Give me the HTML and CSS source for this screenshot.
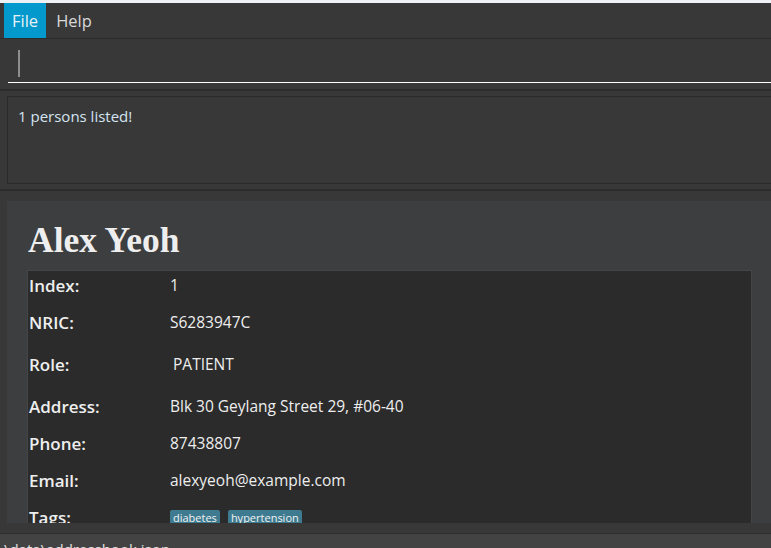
FILE: index.html
```html
<!DOCTYPE html>
<html lang="en">
<head>
<meta charset="utf-8">
<title>Address App</title>
<link rel="stylesheet" href="styles.css">
</head>
<body>
<div class="app">
  <div class="topstrip"></div>
  <nav class="menubar">
    <span class="menu-item active">File</span>
    <span class="menu-item">Help</span>
  </nav>
  <section class="command">
    <div class="command-input"><span class="caret"></span></div>
  </section>
  <section class="result-pane">
    <div class="result-box">1 persons listed!</div>
  </section>
  <section class="list-pane">
    <div class="card">
      <h1 class="name">Alex Yeoh</h1>
      <div class="details">
        <div class="row"><span class="label">Index:</span><span class="value">1</span></div>
        <div class="row"><span class="label">NRIC:</span><span class="value">S6283947C</span></div>
        <div class="row"><span class="label">Role:</span><span class="value role">PATIENT</span></div>
        <div class="row"><span class="label">Address:</span><span class="value">Blk 30 Geylang Street 29, #06-40</span></div>
        <div class="row"><span class="label">Phone:</span><span class="value">87438807</span></div>
        <div class="row"><span class="label">Email:</span><span class="value">alexyeoh@example.com</span></div>
        <div class="row"><span class="label">Tags:</span><span class="value tags"><span class="tag">diabetes</span><span class="tag">hypertension</span></span></div>
      </div>
    </div>
  </section>
  <footer class="statusbar">.\data\addressbook.json</footer>
</div>
</body>
</html>
```

FILE: styles.css
```css
html, body {
  margin: 0;
  padding: 0;
  background: #383838;
  overflow: hidden;
}

.app {
  width: 771px;
  height: 548px;
  display: flex;
  flex-direction: column;
  font-family: "Open Sans", "Noto Sans", sans-serif;
  color: #e6e6e6;
  overflow: hidden;
}

.topstrip {
  height: 3px;
  background: #eef1f6;
  flex: none;
}

.menubar {
  height: 35px;
  flex: none;
  display: flex;
  padding-left: 4px;
  border-bottom: 1px solid #2b2b2b;
  background: #383838;
}

.menu-item {
  padding: 0 8px 0 10px;
  line-height: 35px;
  font-size: 16.5px;
  color: #d9d9d9;
}

.menu-item.active {
  padding: 0 8px;
  background: #0399cc;
  color: #e8f1f6;
}

.command {
  height: 52px;
  flex: none;
  padding-left: 8px;
  border-bottom: 2px solid #2b2b2b;
  box-sizing: border-box;
}

.command-input {
  height: 44px;
  border-bottom: 1px solid #ffffff;
  box-sizing: border-box;
  padding: 11px 0 0 10px;
}

.caret {
  display: block;
  width: 2px;
  height: 27px;
  background: #8e8e8e;
}

.result-pane {
  flex: none;
  padding: 5px 0 5px 7px;
  border-bottom: 2px solid #2b2b2b;
}

.result-box {
  height: 88px;
  border: 1px solid #2a2a2a;
  border-right: none;
  padding: 8px 10px;
  box-sizing: border-box;
  font-size: 15px;
  line-height: 22px;
  color: #d4e4f0;
}

.list-pane {
  flex: none;
  height: 342px;
  padding: 10px 0 0 7px;
  box-sizing: border-box;
  overflow: hidden;
  border-bottom: 10px solid #383838;
}

.card {
  background: #3d3e40;
  padding: 19px 19px 0 20px;
  height: 400px;
}

.name {
  margin: 0 0 10px 1px;
  font-family: "Liberation Serif", "Times New Roman", serif;
  font-weight: bold;
  font-size: 35.5px;
  line-height: 40px;
  color: #eeeeee;
}

.details {
  background: #2b2b2b;
  border: 1px solid #454545;
  padding: 0 0 0 1px;
  display: flex;
  flex-direction: column;
  gap: 8px;
  height: 400px;
}

.row {
  display: flex;
  align-items: center;
  min-height: 29px;
}

.label {
  width: 141px;
  flex: none;
  font-weight: 600;
  font-size: 17px;
  line-height: 29px;
  color: #eeeeee;
}

.value {
  font-size: 15.5px;
  line-height: 29px;
  color: #eeeeee;
}

.value.role {
  padding: 5px 3px;
}

.tags {
  display: flex;
  gap: 8px;
  align-items: center;
}

.tag {
  background: #3e7b91;
  color: #f2f2f2;
  font-size: 11px;
  line-height: 16px;
  padding: 0 3px;
  border-radius: 2px;
}

.statusbar {
  flex: 1;
  border-top: 1px solid #2e2e2e;
  background: #434343;
  font-size: 15px;
  line-height: 20px;
  padding: 5px 0 0 0;
  color: #e0e0e0;
  white-space: nowrap;
}
```
